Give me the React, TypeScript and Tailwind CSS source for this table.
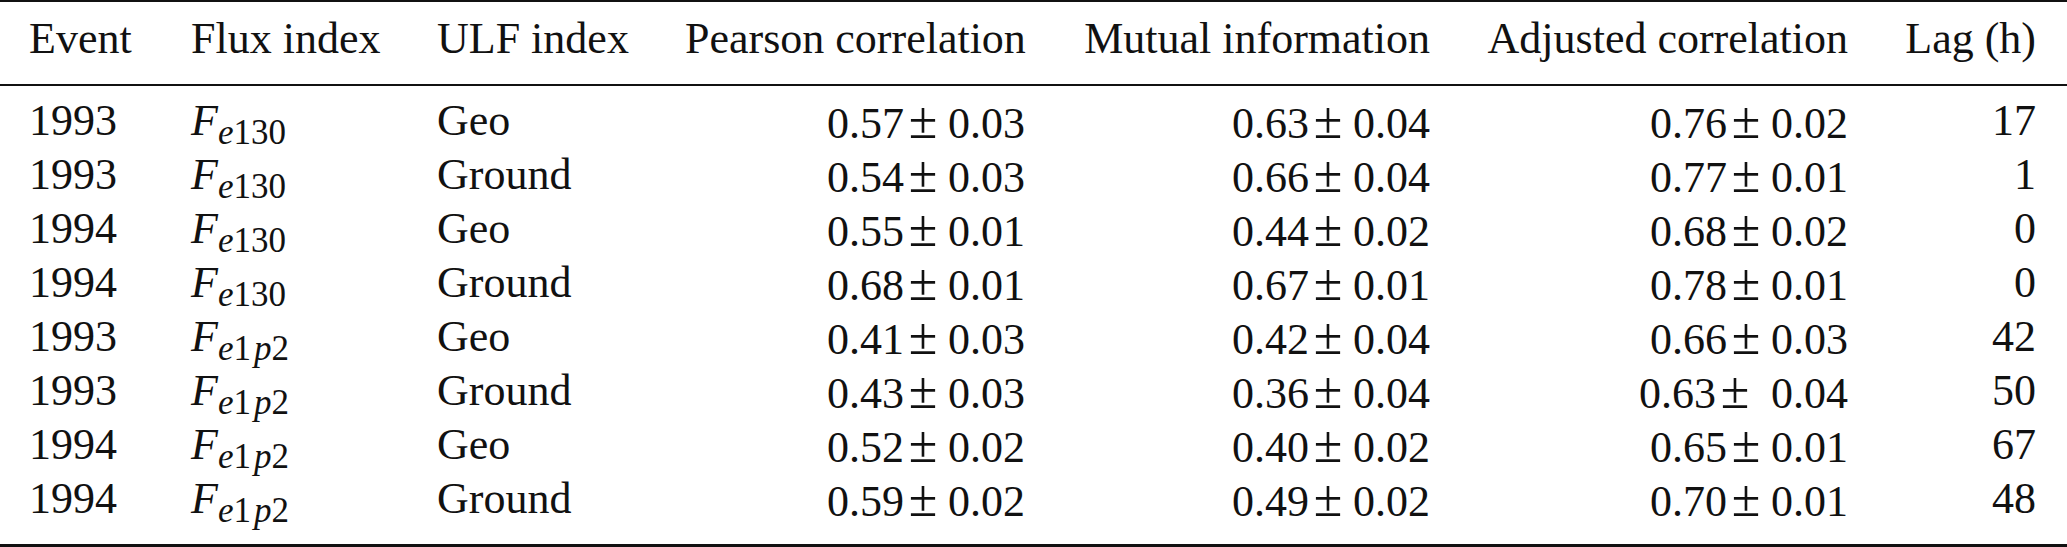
import React from "react";

type Row = {
  event: string;
  flux: "130" | "1p2";
  ulf: string;
  pearson: [string, string];
  mutual: [string, string];
  adjusted: [string, string, boolean?];
  lag: string;
};

const rows: Row[] = [
  { event: "1993", flux: "130", ulf: "Geo", pearson: ["0.57", "0.03"], mutual: ["0.63", "0.04"], adjusted: ["0.76", "0.02"], lag: "17" },
  { event: "1993", flux: "130", ulf: "Ground", pearson: ["0.54", "0.03"], mutual: ["0.66", "0.04"], adjusted: ["0.77", "0.01"], lag: "1" },
  { event: "1994", flux: "130", ulf: "Geo", pearson: ["0.55", "0.01"], mutual: ["0.44", "0.02"], adjusted: ["0.68", "0.02"], lag: "0" },
  { event: "1994", flux: "130", ulf: "Ground", pearson: ["0.68", "0.01"], mutual: ["0.67", "0.01"], adjusted: ["0.78", "0.01"], lag: "0" },
  { event: "1993", flux: "1p2", ulf: "Geo", pearson: ["0.41", "0.03"], mutual: ["0.42", "0.04"], adjusted: ["0.66", "0.03"], lag: "42" },
  { event: "1993", flux: "1p2", ulf: "Ground", pearson: ["0.43", "0.03"], mutual: ["0.36", "0.04"], adjusted: ["0.63", "0.04", true], lag: "50" },
  { event: "1994", flux: "1p2", ulf: "Geo", pearson: ["0.52", "0.02"], mutual: ["0.40", "0.02"], adjusted: ["0.65", "0.01"], lag: "67" },
  { event: "1994", flux: "1p2", ulf: "Ground", pearson: ["0.59", "0.02"], mutual: ["0.49", "0.02"], adjusted: ["0.70", "0.01"], lag: "48" },
];

function PM({ a, b, wide }: { a: string; b: string; wide?: boolean }) {
  return (
    <span className="whitespace-nowrap">
      {a}
      <span
        className={
          wide
            ? "inline-block w-[30px] text-center text-[52px] leading-[54px] ml-[4px] mr-[21px]"
            : "inline-block w-[30px] text-center text-[52px] leading-[54px] ml-[4px] mr-[10px]"
        }
      >
        ±
      </span>
      {b}
    </span>
  );
}

function Flux({ kind }: { kind: "130" | "1p2" }) {
  return (
    <span className="whitespace-nowrap">
      <span className="italic">F</span>
      <span className="relative top-[9px] text-[35px]">
        <span className="italic">e</span>
        {kind === "130" ? (
          "130"
        ) : (
          <>
            1<span className="italic ml-[3px]">p</span>2
          </>
        )}
      </span>
    </span>
  );
}

const grid =
  "grid grid-cols-[162px_246px_248px_340px_405px_418px_188px] pl-[29px]";

export default function App() {
  return (
    <div className="w-[2067px] h-[547px] bg-white text-[#111] text-[44px] leading-[54px] overflow-hidden font-['Liberation_Serif']">
      <div className="h-[2px] bg-[#111]" />
      <div className={`${grid} h-[82px] pt-[10px]`}>
        <div>Event</div>
        <div>Flux index</div>
        <div>ULF index</div>
        <div className="text-right whitespace-nowrap">Pearson correlation</div>
        <div className="text-right whitespace-nowrap">Mutual information</div>
        <div className="text-right whitespace-nowrap">Adjusted correlation</div>
        <div className="text-right whitespace-nowrap">Lag (h)</div>
      </div>
      <div className="h-[2px] bg-[#111]" />
      <div className="h-[458px] pt-[8px]">
        {rows.map((r, i) => (
          <div key={i} className={`${grid} h-[54px]`}>
            <div>{r.event}</div>
            <div>
              <Flux kind={r.flux} />
            </div>
            <div>{r.ulf}</div>
            <div className="text-right">
              <PM a={r.pearson[0]} b={r.pearson[1]} />
            </div>
            <div className="text-right">
              <PM a={r.mutual[0]} b={r.mutual[1]} />
            </div>
            <div className="text-right">
              <PM a={r.adjusted[0]} b={r.adjusted[1]} wide={r.adjusted[2]} />
            </div>
            <div className="text-right">{r.lag}</div>
          </div>
        ))}
      </div>
      <div className="h-[3px] bg-[#111]" />
    </div>
  );
}
